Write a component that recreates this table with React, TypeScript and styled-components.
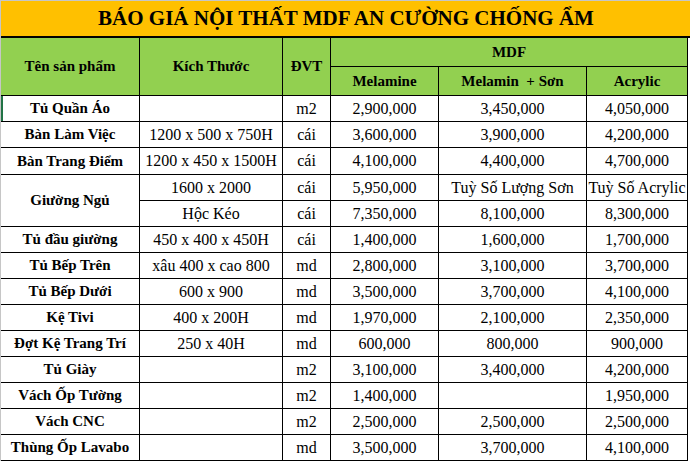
import React from "react";
import styled, { createGlobalStyle } from "styled-components";

const GlobalStyle = createGlobalStyle`
  html, body { margin: 0; padding: 0; background: #ffffff; }
  body { font-family: "Liberation Serif", "Times New Roman", serif; color: #000; }
`;

const Sheet = styled.div`
  width: 689px;
  border-top: 1px solid #c6c6c6;
  border-left: 1px solid #c6c6c6;
  font-family: "Liberation Serif", "Times New Roman", serif;
`;

const Title = styled.div`
  height: 35px;
  background: #ffc000;
  border-bottom: 2px solid #000;
  display: flex;
  align-items: center;
  justify-content: center;
  font-family: "Liberation Serif", "Times New Roman", serif;
  font-weight: bold;
  font-size: 21px;
  padding-left: 1px;
`;

const Grid = styled.div`
  display: grid;
  width: 687px;
  box-sizing: border-box;
  grid-template-columns: 138px 142px 47px 107px 147px 100px;
  grid-template-rows: 28px 28px 25px 25px 26px repeat(11, 25px);
  gap: 1px;
  padding: 0 1px 1px 0;
  background: #000;
`;

const Cell = styled.div<{ $head?: boolean; $bold?: boolean; $rows?: number; $cols?: number; $selected?: boolean }>`
  background: ${(p) => (p.$head ? "#92d050" : "#ffffff")};
  display: flex;
  align-items: center;
  justify-content: center;
  white-space: nowrap;
  font-family: "Liberation Serif", "Times New Roman", serif;
  font-weight: ${(p) => (p.$bold || p.$head ? "bold" : "normal")};
  font-size: ${(p) => (p.$bold || p.$head ? "15px" : "16px")};
  grid-row: ${(p) => (p.$rows ? `span ${p.$rows}` : "auto")};
  grid-column: ${(p) => (p.$cols ? `span ${p.$cols}` : "auto")};
  box-shadow: ${(p) => (p.$selected ? "inset 2px 0 0 #217346" : "none")};
`;

type Row = { name: string; size: string; unit: string; a: string; b: string; c: string };

const rows: Row[] = [
  { name: "Tủ Quần Áo", size: "", unit: "m2", a: "2,900,000", b: "3,450,000", c: "4,050,000" },
  { name: "Bàn Làm Việc", size: "1200 x 500 x 750H", unit: "cái", a: "3,600,000", b: "3,900,000", c: "4,200,000" },
  { name: "Bàn Trang Điểm", size: "1200 x 450 x 1500H", unit: "cái", a: "4,100,000", b: "4,400,000", c: "4,700,000" },
];

const rowsAfter: Row[] = [
  { name: "Tủ đầu giường", size: "450 x 400 x 450H", unit: "cái", a: "1,400,000", b: "1,600,000", c: "1,700,000" },
  { name: "Tủ Bếp Trên", size: "xâu 400 x cao 800", unit: "md", a: "2,800,000", b: "3,100,000", c: "3,700,000" },
  { name: "Tủ Bếp Dưới", size: "600 x 900", unit: "md", a: "3,500,000", b: "3,700,000", c: "4,100,000" },
  { name: "Kệ Tivi", size: "400 x 200H", unit: "md", a: "1,970,000", b: "2,100,000", c: "2,350,000" },
  { name: "Đợt Kệ Trang Trí", size: "250 x 40H", unit: "md", a: "600,000", b: "800,000", c: "900,000" },
  { name: "Tủ Giày", size: "", unit: "m2", a: "3,100,000", b: "3,400,000", c: "4,200,000" },
  { name: "Vách Ốp Tường", size: "", unit: "m2", a: "1,400,000", b: "", c: "1,950,000" },
  { name: "Vách CNC", size: "", unit: "m2", a: "2,500,000", b: "2,500,000", c: "2,500,000" },
  { name: "Thùng Ốp Lavabo", size: "", unit: "md", a: "3,500,000", b: "3,700,000", c: "4,100,000" },
];

const DataRow = ({ r, selected }: { r: Row; selected?: boolean }) => (
  <>
    <Cell $bold $selected={selected}>{r.name}</Cell>
    <Cell>{r.size}</Cell>
    <Cell>{r.unit}</Cell>
    <Cell>{r.a}</Cell>
    <Cell>{r.b}</Cell>
    <Cell>{r.c}</Cell>
  </>
);

export default function App() {
  return (
    <>
      <GlobalStyle />
      <Sheet>
        <Title>BÁO GIÁ NỘI THẤT MDF AN CƯỜNG CHỐNG ẨM</Title>
        <Grid>
          <Cell $head $rows={2}>Tên sản phẩm</Cell>
          <Cell $head $rows={2}>Kích Thước</Cell>
          <Cell $head $rows={2}>ĐVT</Cell>
          <Cell $head $cols={3}>MDF</Cell>
          <Cell $head>Melamine</Cell>
          <Cell $head>Melamin &nbsp;+ Sơn</Cell>
          <Cell $head>Acrylic</Cell>

          {rows.map((r, i) => (
            <DataRow key={r.name} r={r} selected={i === 0} />
          ))}

          <Cell $bold $rows={2}>Giường Ngủ</Cell>
          <Cell>1600 x 2000</Cell>
          <Cell>cái</Cell>
          <Cell>5,950,000</Cell>
          <Cell>Tuỳ Số Lượng Sơn</Cell>
          <Cell>Tuỳ Số Acrylic</Cell>
          <Cell>Hộc Kéo</Cell>
          <Cell>cái</Cell>
          <Cell>7,350,000</Cell>
          <Cell>8,100,000</Cell>
          <Cell>8,300,000</Cell>

          {rowsAfter.map((r) => (
            <DataRow key={r.name} r={r} />
          ))}
        </Grid>
      </Sheet>
    </>
  );
}
